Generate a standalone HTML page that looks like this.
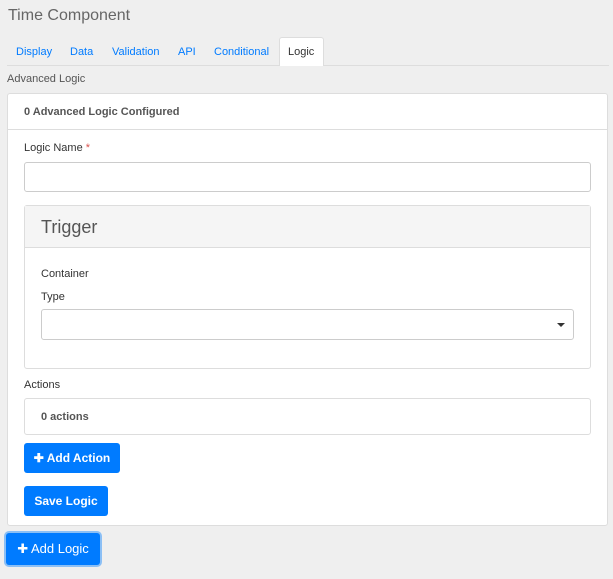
<!DOCTYPE html>
<html><head><style>
*{box-sizing:border-box;margin:0;padding:0}
body{width:613px;height:579px;background:#efefef;font-family:"Liberation Sans",sans-serif;font-size:11px;color:#333;position:relative;overflow:hidden}
.a{position:absolute}
.btn{position:absolute;background:#007bff;color:#fff;border-radius:3px;font-size:12px;font-weight:bold;display:flex;align-items:center;justify-content:center}
.inp{position:absolute;background:#fff;border:1px solid #ccc;border-radius:3px}
</style></head><body>
<div class="a" style="left:8px;top:7px;font-size:16px;color:#666">Time Component</div>
<div class="a" style="left:7px;top:65px;width:602px;height:1px;background:#ddd"></div>
<div class="a" style="left:279px;top:37px;width:45px;height:29px;background:#fff;border:1px solid #ddd;border-bottom:none;border-radius:3px 3px 0 0"></div>
<div class="a" style="top:46px;left:16px;color:#007bff">Display</div>
<div class="a" style="top:46px;left:70px;color:#007bff">Data</div>
<div class="a" style="top:46px;left:112px;color:#007bff">Validation</div>
<div class="a" style="top:46px;left:178px;color:#007bff">API</div>
<div class="a" style="top:46px;left:214px;color:#007bff">Conditional</div>
<div class="a" style="top:46px;left:288px;color:#333">Logic</div>
<div class="a" style="top:73px;left:7px;color:#555">Advanced Logic</div>
<div class="a" style="left:7px;top:93px;width:601px;height:433px;background:#fff;border:1px solid #ddd;border-radius:3px"></div>
<div class="a" style="left:8px;top:129px;width:599px;height:1px;background:#ddd"></div>
<div class="a" style="left:24px;top:106px;font-weight:bold;color:#555">0 Advanced Logic Configured</div>
<div class="a" style="left:24px;top:142px">Logic Name <span style="color:#d9534f">*</span></div>
<div class="inp" style="left:24px;top:162px;width:567px;height:30px"></div>
<div class="a" style="left:24px;top:205px;width:567px;height:164px;border:1px solid #ddd;border-radius:3px"></div>
<div class="a" style="left:25px;top:206px;width:565px;height:42px;background:#f5f5f5;border-bottom:1px solid #ddd"></div>
<div class="a" style="left:41px;top:217px;font-size:18px;color:#555">Trigger</div>
<div class="a" style="left:41px;top:268px">Container</div>
<div class="a" style="left:41px;top:291px">Type</div>
<div class="inp" style="left:41px;top:309px;width:533px;height:31px"></div>
<div class="a" style="left:557px;top:323px;border-left:4px solid transparent;border-right:4px solid transparent;border-top:4px solid #333"></div>
<div class="a" style="left:24px;top:379px">Actions</div>
<div class="a" style="left:24px;top:398px;width:567px;height:37px;border:1px solid #ddd;border-radius:3px"></div>
<div class="a" style="left:41px;top:411px;font-weight:bold;color:#555">0 actions</div>
<div class="btn" style="left:24px;top:443px;width:96px;height:30px">✚ Add Action</div>
<div class="btn" style="left:24px;top:486px;width:84px;height:30px">Save Logic</div>
<div class="btn" style="left:6px;top:533px;width:94px;height:32px;font-weight:normal;font-size:13px;box-shadow:0 0 0 2px #8bbff5">✚ Add Logic</div>
</body></html>
